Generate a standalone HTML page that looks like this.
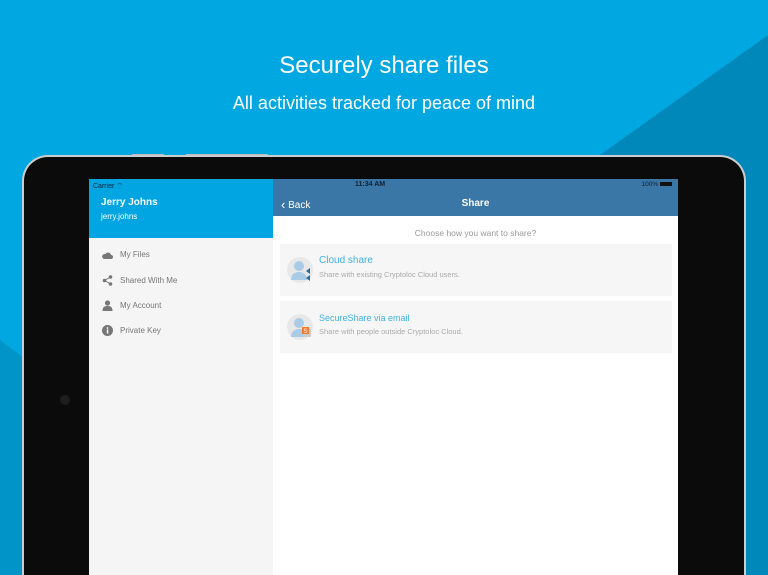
<!DOCTYPE html>
<html style="width:768px;height:575px;overflow:hidden"><head><style>
*{margin:0;padding:0;box-sizing:border-box}
body{width:768px;height:575px;overflow:hidden;font-family:"Liberation Sans",sans-serif}
#wrap{position:absolute;left:0;top:0;width:768px;height:575px;overflow:hidden;background:#01a7e1}
.bg{position:absolute;left:0;top:0}
h1{position:absolute;top:52px;width:100%;text-align:center;color:#fff;font-size:24px;font-weight:normal}
h2{position:absolute;top:93px;width:100%;text-align:center;color:#fff;font-size:18px;font-weight:normal}
.ipad{position:absolute;left:22px;top:155px;width:724px;height:420px;background:#0b0b0b;border-radius:26px 26px 0 0;border:2px solid #c9cdd0;border-bottom:none}
.screen{position:absolute;left:89px;top:179px;width:589px;height:396px;background:#fff}
.side{position:absolute;left:0;top:0;width:184px;height:396px;background:#f5f5f5}
.sh{height:59px;background:#00a5e2;color:#fff;position:relative}
.st{font-size:7px;color:#123;position:absolute;left:4px;top:3px}
.nm{position:absolute;left:12px;top:18px;font-weight:bold;font-size:10px}
.un{position:absolute;left:12px;top:33px;font-size:8px}
.mi{position:absolute;left:31px;font-size:8px;color:#777}
.ic{position:absolute;left:13px;width:11px;height:11px}
.nav{position:absolute;left:184px;top:0;width:405px;height:37px;background:#3a76a6;color:#fff}
.card{position:absolute;left:191px;width:392px;height:52px;background:#f6f6f6}
.av{position:absolute;left:7px;top:13px;width:26px;height:26px;border-radius:50%;background:#e8e8e8}
.t1{position:absolute;left:39px;font-size:10px;color:#3fb2e6}
.t2{position:absolute;left:39px;font-size:7.5px;color:#aaa}
</style></head><body><div id="wrap">
<svg class="bg" width="768" height="575"><polygon points="768,35 768,575 380,575 600,155" fill="#0188bb"/><polygon points="0,340 60,385 60,575 0,575" fill="#0194c8"/></svg>
<h1>Securely share files</h1>
<h2>All activities tracked for peace of mind</h2>
<div style="position:absolute;left:132px;top:154px;width:32px;height:2px;background:#bbb"></div>
<div style="position:absolute;left:186px;top:154px;width:82px;height:2px;background:#bbb"></div>
<div class="ipad"></div>
<div style="position:absolute;left:60px;top:395px;width:10px;height:10px;border-radius:50%;background:#1e1e1e"></div>
<div class="screen">
 <div class="side">
  <div class="sh"><div class="st">Carrier ⌔</div><div class="nm">Jerry Johns</div><div class="un">jerry.johns</div></div>
  <svg class="ic" style="top:71px" viewBox="0 0 11 11"><path d="M2 9h7a2 2 0 0 0 0-4 3 3 0 0 0-5.5-1A2.5 2.5 0 0 0 2 9z" fill="#777"/></svg><div class="mi" style="top:71px">My Files</div>
  <svg class="ic" style="top:96px" viewBox="0 0 11 11"><circle cx="2.5" cy="5.5" r="1.8" fill="#777"/><circle cx="8.5" cy="2" r="1.8" fill="#777"/><circle cx="8.5" cy="9" r="1.8" fill="#777"/><path d="M2.5 5.5L8.5 2M2.5 5.5L8.5 9" stroke="#777"/></svg><div class="mi" style="top:97px">Shared With Me</div>
  <svg class="ic" style="top:121px" viewBox="0 0 11 11"><circle cx="5.5" cy="3" r="2.6" fill="#777"/><path d="M0.5 11c0-4 2-5 5-5s5 1 5 5z" fill="#777"/></svg><div class="mi" style="top:122px">My Account</div>
  <svg class="ic" style="top:146px" viewBox="0 0 11 11"><circle cx="5.5" cy="5.5" r="5.5" fill="#777"/><rect x="4.8" y="4.5" width="1.5" height="4" fill="#fff"/><circle cx="5.5" cy="3" r="0.9" fill="#fff"/></svg><div class="mi" style="top:147px">Private Key</div>
 </div>
 <div class="nav">
  <div style="position:absolute;left:82px;top:2px;font-size:7px;color:#123;font-weight:bold">11:34 AM</div>
  <div style="position:absolute;right:6px;top:2px;font-size:6.5px;color:#123">100% <span style="display:inline-block;width:12px;height:4px;background:#111;vertical-align:middle"></span></div>
  <div style="position:absolute;left:8px;top:17px;font-size:10px"><span style="font-size:13px;position:relative;top:1px">‹</span> Back</div>
  <div style="position:absolute;left:0;width:405px;text-align:center;top:19px;font-size:10px;font-weight:bold">Share</div>
 </div>
 <div style="position:absolute;left:184px;width:405px;text-align:center;top:49px;font-size:8.5px;color:#999">Choose how you want to share?</div>
 <div class="card" style="top:65px"><div class="av"></div>
  <svg style="position:absolute;left:10px;top:16px" width="24" height="24"><circle cx="9" cy="6" r="5" fill="#a9cbe6"/><path d="M1 20c0-6 4-8 8-8s8 2 8 8z" fill="#a9cbe6"/><path d="M20 8v6l-4-3zM20 15v6l-4-3z" fill="#2d6aa0"/></svg>
  <div class="t1" style="top:11px">Cloud share</div><div class="t2" style="top:26px">Share with existing Cryptoloc Cloud users.</div></div>
 <div class="card" style="top:122px"><div class="av"></div>
  <svg style="position:absolute;left:10px;top:16px" width="24" height="24"><circle cx="9" cy="6" r="5" fill="#a9cbe6"/><path d="M1 20c0-6 4-8 8-8s8 2 8 8z" fill="#a9cbe6"/><rect x="13" y="12" width="8" height="8" fill="#ccc"/><rect x="12" y="10" width="7" height="7" fill="#ef7b31"/><text x="13.5" y="16" font-size="6" fill="#fff" font-family="Liberation Sans">S</text></svg>
  <div class="t1" style="top:12px;font-size:9px">SecureShare via email</div><div class="t2" style="top:26px">Share with people outside Cryptoloc Cloud.</div></div>
</div>
</div></body></html>
